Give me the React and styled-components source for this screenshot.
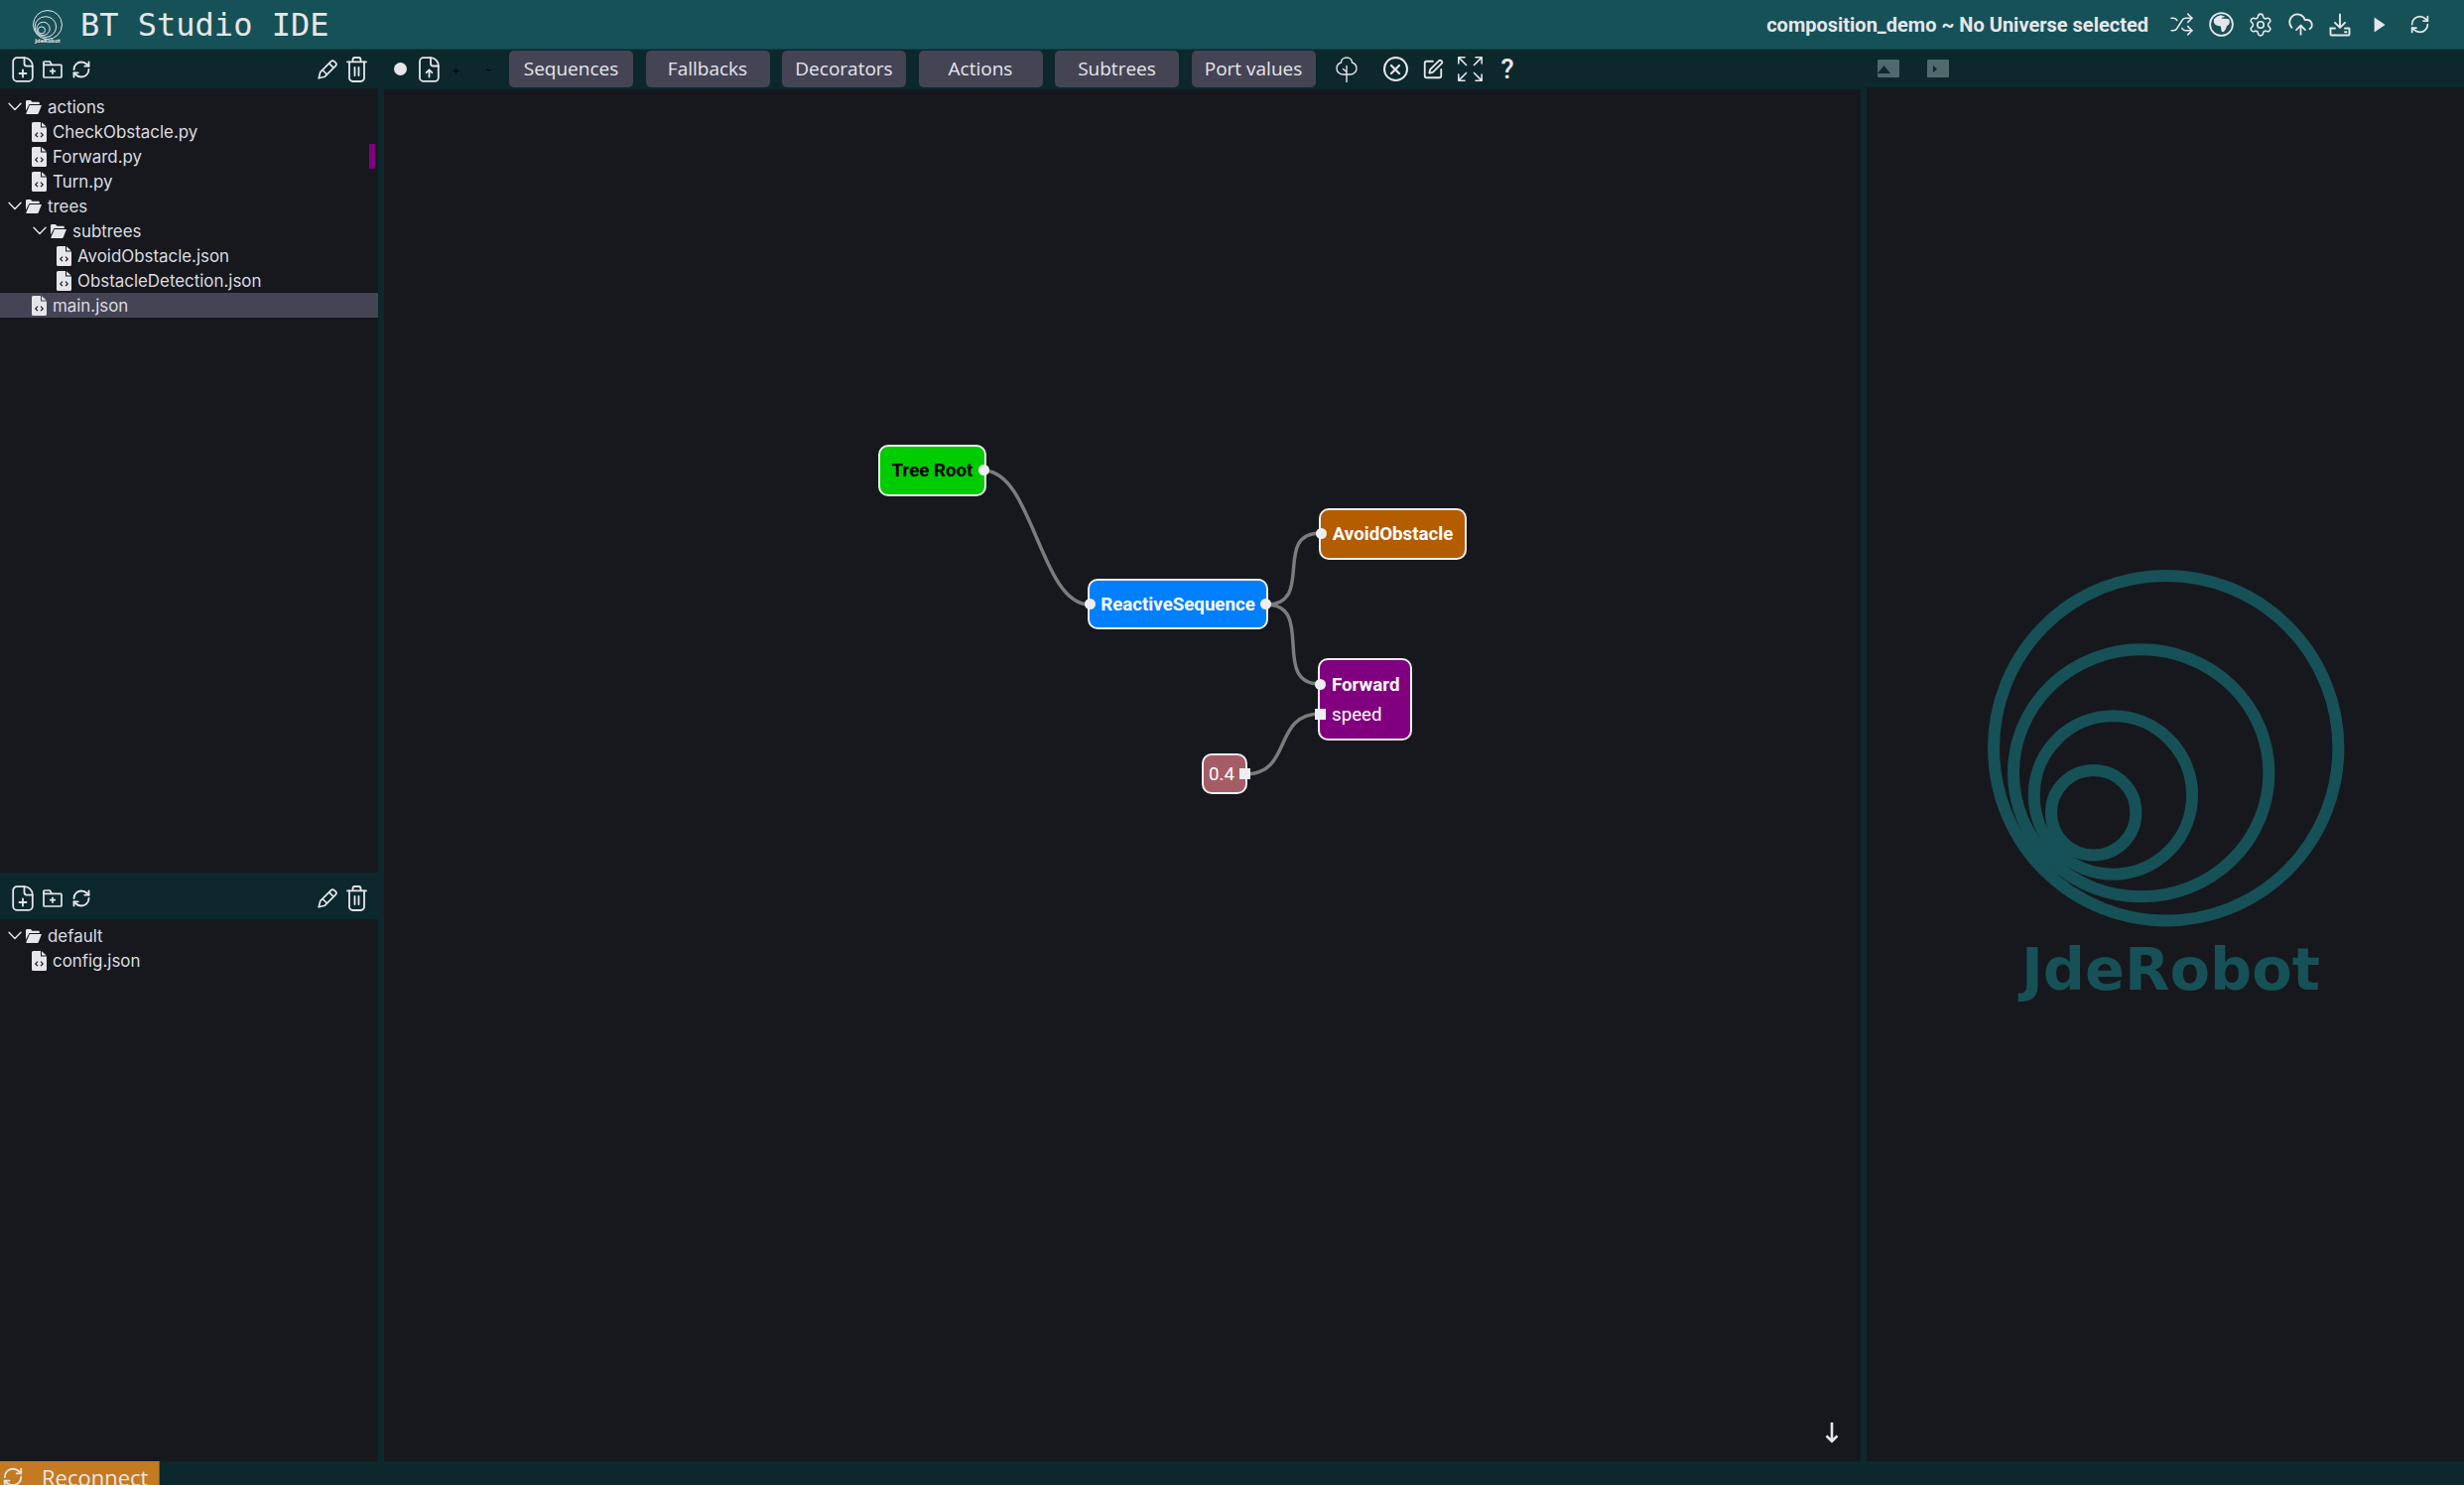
import React from "react"
import styled, {createGlobalStyle} from "styled-components"
import {Shuffle, Settings, CloudUpload, RefreshCw, SquarePen} from "lucide-react"
import {BsArrowsFullscreen} from "react-icons/bs"

const BAND = "#0c282c"
const HEADER = "#165157"
const PANEL = "#16181d"
const INK = "#e6e6ea"

const GlobalStyle = createGlobalStyle`
    html, body {
        margin: 0;
        height: 100%;
        background: ${BAND};
        overflow: hidden;
    }
    #root {
        height: 100%;
    }
    * {
        box-sizing: border-box;
    }
`

const tree = [
    {kind: "folder", level: 0, name: "actions"},
    {kind: "file", level: 1, name: "CheckObstacle.py"},
    {kind: "file", level: 1, name: "Forward.py", marked: true},
    {kind: "file", level: 1, name: "Turn.py"},
    {kind: "folder", level: 0, name: "trees"},
    {kind: "folder", level: 1, name: "subtrees"},
    {kind: "file", level: 2, name: "AvoidObstacle.json"},
    {kind: "file", level: 2, name: "ObstacleDetection.json"},
    {kind: "file", level: 1, name: "main.json", selected: true},
]

const configTree = [
    {kind: "folder", level: 0, name: "default"},
    {kind: "file", level: 1, name: "config.json"},
]

const paletteItems = ["Sequences", "Fallbacks", "Decorators", "Actions", "Subtrees", "Port values"]

// canvas coordinates, the canvas starts at 387,90 of the page
const edges = [
    [604, 384, 711, 519],
    [889, 519, 944, 447],
    [889, 519, 943, 599],
    [867, 690, 944, 629],
]

const edgePath = ([x1, y1, x2, y2]) => `M${x1} ${y1} C${x1 + 50} ${y1} ${x2 - 50} ${y2} ${x2} ${y2}`

const LogoRings = ({size, stroke}) => (
    <svg width={size} height={size} viewBox="0 0 360 360" fill="none" stroke={stroke} strokeWidth="12">
        <circle cx="179.7" cy="179.7" r="173.7" />
        <ellipse cx="154.7" cy="204.8" rx="128.7" ry="124.5" />
        <circle cx="126.4" cy="227" r="79.7" />
        <circle cx="106.7" cy="244.7" r="42.7" />
    </svg>
)

const FileAddIcon = () => (
    <svg width="22" height="26" viewBox="0 0 22 26" fill="none" stroke={INK} strokeWidth="1.8" strokeLinecap="round" strokeLinejoin="round">
        <path d="M5 1.2h7.5c4.5 0 8.3 3.8 8.3 8.3V21a3.8 3.8 0 0 1-3.8 3.8H5A3.8 3.8 0 0 1 1.2 21V5A3.8 3.8 0 0 1 5 1.2z" />
        <path d="M12.5 1.2V7a2.6 2.6 0 0 0 2.6 2.6h5.700" />
        <path d="M11 13.500v7M7.500 17h7" />
    </svg>
)

const FolderAddIcon = () => (
    <svg width="20" height="18" viewBox="0 0 20 18" fill="none" stroke={INK} strokeWidth="1.7" strokeLinejoin="round">
        <path d="M1 3V16.200a.8.8 0 0 0 .8.8h16.400a.8.8 0 0 0 .8-.8V5.200a.8.8 0 0 0-.8-.8H1z" />
        <path d="M1 4V1.800a.8.8 0 0 1 .8-.8h5.400l2 3.400" />
        <path d="M10 7.700v6M7 10.700h6" />
    </svg>
)

const PencilIcon = () => (
    <svg width="20" height="20" viewBox="0 0 20 20" fill="none" stroke={INK} strokeWidth="1.7" strokeLinejoin="round">
        <path d="M1.200 18.800 2.800 12.600 13.600 1.800a2.300 2.300 0 0 1 3.200 0l1.400 1.400a2.300 2.300 0 0 1 0 3.200L7.400 17.200z" />
        <path d="M11.600 3.800 16.200 8.400M5 10.500 9.500 15" />
    </svg>
)

const TrashIcon = () => (
    <svg width="21" height="26" viewBox="0 0 21 26" fill="none" stroke={INK} strokeWidth="1.8" strokeLinecap="round" strokeLinejoin="round">
        <path d="M1 5.400h19" />
        <path d="M6.500 5V3.200A2.200 2.200 0 0 1 8.700 1h3.600a2.200 2.200 0 0 1 2.200 2.200V5" />
        <path d="M3 5.400V21.500A3.500 3.500 0 0 0 6.500 25h8a3.500 3.500 0 0 0 3.500-3.500V5.400" />
        <path d="M8.500 11v8M12.500 11v8" />
    </svg>
)

const UploadFileIcon = () => (
    <svg width="21" height="26" viewBox="0 0 21 26" fill="none" stroke={INK} strokeWidth="1.8" strokeLinecap="round" strokeLinejoin="round">
        <path d="M4.500 1.200H12c4.300 0 7.800 3.600 7.800 8V21.200a3.600 3.600 0 0 1-3.600 3.600H4.500A3.600 3.600 0 0 1 1 21.200V4.800A3.600 3.600 0 0 1 4.500 1.200z" />
        <path d="M12 1.200V7a2.500 2.500 0 0 0 2.500 2.500h5.300" />
        <path d="M10.500 20.500v-7M7.600 16.200l2.900-2.900 2.900 2.900" />
    </svg>
)

const TreeIcon = () => (
    <svg width="22" height="26" viewBox="0 0 22 26" fill="none" stroke={INK} strokeWidth="1.400" strokeLinecap="round" strokeLinejoin="round">
        <path d="M11 1C7.500 1 5.500 3.300 5.500 6 2.500 7 1 9.500 1 12c0 3.500 3 6 6.500 6h7c3.500 0 6.500-2.500 6.500-6 0-2.500-1.500-5-4.500-6C16.500 3.300 14.500 1 11 1z" />
        <path d="M11 9.500V25.500M11 15.500 7.500 12.500" />
    </svg>
)

const GlobeIcon = () => (
    <svg width="25" height="25" viewBox="0 0 25 25">
        <circle cx="12.5" cy="12.5" r="11.4" fill="none" stroke={INK} strokeWidth="1.8" />
        <path fill={INK} d="M5 7.500c2-2.800 4.500-4 7.500-4.300 1 .9 2.500 1.300 3.600 1-.3 1-1.500 1.500-2.800 1.400l-.6 1c2 .7 5-.4 7.600 1 .7 1.900.7 3.500-.2 5l-2.300 1.900c-.3 2-1.300 4-3 5.600-1.200.5-2 .2-2.200-.9-.4-1.700-.4-3.300-.7-4.700C10.500 14 8 14.300 6 12.600 4.800 11 4.600 9.200 5 7.500z" />
    </svg>
)

const TrayDownloadIcon = () => (
    <svg width="22" height="24" viewBox="0 0 22 24" fill="none" stroke={INK} strokeWidth="1.9" strokeLinecap="round" strokeLinejoin="round">
        <path d="M11 1.500v13M6 9.800l5 5 5-5" />
        <path d="M1.500 15.500v6a1 1 0 0 0 1 1h17a1 1 0 0 0 1-1v-6h-4.500" />
        <path d="M6 15.500H1.500" />
        <path d="M16 19.300h1.500" />
    </svg>
)

const PlayIcon = () => (
    <svg width="12" height="16" viewBox="0 0 12 16">
        <path fill={INK} d="M0.600 0.600 11.600 8 0.600 15.400z" />
    </svg>
)

const ChevronIcon = () => (
    <svg width="14" height="9" viewBox="0 0 14 9" fill="none" stroke={INK} strokeWidth="1.400" strokeLinecap="round" strokeLinejoin="round">
        <path d="M1 1.200l6 6.300 6-6.300" />
    </svg>
)

const OpenFolderIcon = () => (
    <svg width="16" height="14" viewBox="0 0 16 14">
        <path fill={INK} d="M0 1.200A1.200 1.200 0 0 1 1.200 0h3.700l1.500 1.800h6.200c.7 0 1.200.5 1.200 1.200v1H3.500L0 10.500z" />
        <path fill={INK} d="M3.900 5H16l-3.300 8.200c-.2.500-.6.800-1.100.8H1.100c-.6 0-.9-.5-.7-1z" />
    </svg>
)

const SourceFileIcon = () => (
    <svg width="15" height="20" viewBox="0 0 15 20">
        <path fill={INK} d="M1.500 0H9v5.500h6V18.500A1.500 1.500 0 0 1 13.500 20h-12A1.500 1.500 0 0 1 0 18.500v-17A1.500 1.500 0 0 1 1.500 0z" />
        <path fill={INK} d="M10 0.300 14.700 4.500H10z" />
        <path fill="none" stroke={PANEL} strokeWidth="1.200" d="M6 10.700l-2.200 2.200L6 15.100M9 10.700l2.200 2.200L9 15.100" />
    </svg>
)

const FileActions = () => (
    <ActionStrip>
        <ActionGroup>
            <FileAddIcon />
            <FolderAddIcon />
            <RefreshCw size={20} color={INK} strokeWidth={2.2} />
        </ActionGroup>
        <ActionGroup>
            <PencilIcon />
            <TrashIcon />
        </ActionGroup>
    </ActionStrip>
)

const FileTree = ({rows}) => (
    <TreeList>
        {rows.map(row => (
            <TreeRow key={row.name} $level={row.level} $file={row.kind === "file"} $selected={row.selected}>
                {row.kind === "folder" ? <FolderGlyphs><ChevronIcon /><OpenFolderIcon /></FolderGlyphs> : <SourceFileIcon />}
                <span>{row.name}</span>
                {row.marked && <EditedMark />}
            </TreeRow>
        ))}
    </TreeList>
)

const App = () => {
    return (
        <Page>
            <GlobalStyle />
            <Header>
                <Brand>
                    <BrandLogo>
                        <LogoRings size={30} stroke={INK} />
                        <BrandCaption>JdeRobot</BrandCaption>
                    </BrandLogo>
                    <Title>BT Studio IDE</Title>
                </Brand>
                <HeaderTools>
                    <ProjectName>composition_demo ~ No Universe selected</ProjectName>
                    <IconRow>
                        <IconSlot><Shuffle size={25} color={INK} strokeWidth={1.5} /></IconSlot>
                        <IconSlot><GlobeIcon /></IconSlot>
                        <IconSlot><Settings size={26} color={INK} strokeWidth={1.5} /></IconSlot>
                        <IconSlot><CloudUpload size={27} color={INK} strokeWidth={1.6} /></IconSlot>
                        <IconSlot><TrayDownloadIcon /></IconSlot>
                        <IconSlot><PlayIcon /></IconSlot>
                        <IconSlot><RefreshCw size={21} color={INK} strokeWidth={2} /></IconSlot>
                    </IconRow>
                </HeaderTools>
            </Header>

            <Toolbar>
                <FileActions />
                <EditorTools>
                    <DotButton />
                    <UploadFileIcon />
                    <ZoomSign>+</ZoomSign>
                    <ZoomSign>-</ZoomSign>
                    <Palette>
                        {paletteItems.map(item => <PaletteButton key={item}>{item}</PaletteButton>)}
                    </Palette>
                    <CanvasTools>
                        <TreeIcon />
                        <CloseCircle>
                            <svg width="12" height="12" viewBox="0 0 12 12" stroke={INK} strokeWidth="2.200" strokeLinecap="round">
                                <path d="M2 2l8 8M10 2l-8 8" />
                            </svg>
                        </CloseCircle>
                        <SquarePen size={22} color={INK} strokeWidth={2} />
                        <BsArrowsFullscreen size={25} color={INK} />
                        <HelpMark>?</HelpMark>
                    </CanvasTools>
                </EditorTools>
                <ConsoleTools>
                    <ConsoleChip>
                        <svg width="13" height="8" viewBox="0 0 13 8"><path fill={BAND} d="M6.500 0 13 8H0z" /></svg>
                    </ConsoleChip>
                    <ConsoleChip $small>
                        <svg width="4" height="7" viewBox="0 0 4 7"><path fill={BAND} d="M0 0l4 3.500-4 3.500z" /></svg>
                    </ConsoleChip>
                </ConsoleTools>
            </Toolbar>

            <Body>
                <Sidebar>
                    <UpperTree>
                        <FileTree rows={tree} />
                    </UpperTree>
                    <LowerStrip>
                        <FileActions />
                    </LowerStrip>
                    <LowerTree>
                        <FileTree rows={configTree} />
                    </LowerTree>
                </Sidebar>
                <Canvas>
                    <EdgeLayer width="1488" height="1382">
                        {edges.map((edge, i) => <path key={i} d={edgePath(edge)} />)}
                    </EdgeLayer>
                    <Node $x={498} $y={358} $w={109} $h={52} $bg="#00cc00" $ink="#000">
                        Tree Root
                        <Port $side="right" $top={25} />
                    </Node>
                    <Node $x={709} $y={493} $w={182} $h={51} $bg="#0080ff">
                        ReactiveSequence
                        <Port $side="left" $top={25} />
                        <Port $side="right" $top={25} />
                    </Node>
                    <Node $x={942} $y={422} $w={149} $h={52} $bg="#b35c00">
                        AvoidObstacle
                        <Port $side="left" $top={25} />
                    </Node>
                    <Node $x={941} $y={573} $w={95} $h={83} $bg="#800080" $stacked>
                        <PortName>Forward</PortName>
                        <PortValue>speed</PortValue>
                        <Port $side="left" $top={26} />
                        <Port $side="left" $top={56} $square />
                    </Node>
                    <Node $x={824} $y={669} $w={46} $h={41} $bg="#a65c66" $light>
                        0.4
                        <Port $side="right" $top={20} $square />
                    </Node>
                    <DownArrow width="14" height="21" viewBox="0 0 14 21" fill="none" stroke={INK} strokeWidth="2.600">
                        <path d="M7 0v19M1.500 13.500 7 19l5.500-5.500" />
                    </DownArrow>
                </Canvas>
                <Preview>
                    <LogoRings size={360} stroke={HEADER} />
                    <PreviewCaption>JdeRobot</PreviewCaption>
                </Preview>
            </Body>

            <StatusBar>
                <ReconnectButton>
                    <RefreshCw size={22} color={INK} strokeWidth={2} />
                    Reconnect
                </ReconnectButton>
            </StatusBar>
        </Page>
    )
}

const Page = styled.div`
    display: flex;
    flex-direction: column;
    width: 100%;
    height: 100vh;
    overflow: hidden;
    color: ${INK};
    font-family: "Inter", "Liberation Sans", sans-serif;
`

const Header = styled.header`
    display: flex;
    align-items: center;
    justify-content: space-between;
    flex: 0 0 50px;
    padding: 0 25px 0 33px;
    background: ${HEADER};
    border-bottom: 1px solid #104046;
`

const Brand = styled.div`
    display: flex;
    align-items: center;
    gap: 18px;
`

const BrandLogo = styled.div`
    display: flex;
    flex-direction: column;
    align-items: center;
    width: 30px;
    height: 36px;
    margin-top: 6px;
`

const BrandCaption = styled.span`
    font-family: "DejaVu Sans", sans-serif;
    font-size: 5px;
    font-weight: 700;
    line-height: 6px;
    margin-top: -2px;
`

const Title = styled.h1`
    margin: 0;
    font-family: "DejaVu Sans Mono", "Liberation Mono", monospace;
    font-size: 32px;
    font-weight: 400;
    line-height: 48px;
`

const HeaderTools = styled.div`
    display: flex;
    align-items: center;
    gap: 13px;
`

const ProjectName = styled.span`
    font-family: "Roboto", sans-serif;
    font-size: 20px;
    font-weight: 700;
    line-height: 46px;
`

const IconRow = styled.div`
    display: flex;
    align-items: center;
`

const IconSlot = styled.span`
    display: flex;
    align-items: center;
    justify-content: center;
    width: 40px;
    height: 30px;
`

const Toolbar = styled.div`
    display: flex;
    align-items: center;
    flex: 0 0 38px;
    padding-top: 1px;
    background: ${BAND};
`

const ActionStrip = styled.div`
    display: flex;
    align-items: center;
    justify-content: space-between;
    flex: 0 0 381px;
    padding: 0 11px 0 12px;
`

const ActionGroup = styled.div`
    display: flex;
    align-items: center;
    gap: 9px;
`

const EditorTools = styled.div`
    display: flex;
    align-items: center;
    flex: 1;
    padding-left: 16px;
`

const DotButton = styled.span`
    width: 13px;
    height: 13px;
    margin-right: 12px;
    border-radius: 50%;
    background: ${INK};
`

const ZoomSign = styled.span`
    width: 33px;
    font-size: 13px;
    text-align: center;
    color: #000;
    &:first-of-type {
        margin-left: 5px;
    }
`

const Palette = styled.div`
    display: flex;
    align-items: center;
    gap: 12.5px;
    margin-left: 4px;
`

const PaletteButton = styled.button`
    width: 125px;
    height: 37px;
    padding: 0;
    border: none;
    border-radius: 5px;
    background: #444455;
    color: ${INK};
    font-family: "Open Sans", sans-serif;
    font-size: 19px;
    line-height: 37px;
`

const CanvasTools = styled.div`
    display: flex;
    align-items: center;
    gap: 14px;
    margin-left: 20px;
`

const CloseCircle = styled.span`
    display: flex;
    align-items: center;
    justify-content: center;
    width: 25px;
    height: 25px;
    margin-left: 12px;
    border: 2px solid ${INK};
    border-radius: 50%;
`

const HelpMark = styled.span`
    font-family: "Roboto", sans-serif;
    font-size: 27px;
    font-weight: 500;
    line-height: 26px;
    margin-left: 5px;
`

const ConsoleTools = styled.div`
    display: flex;
    gap: 28px;
    flex: 0 0 591px;
    margin-top: -2px;
`

const ConsoleChip = styled.span`
    display: flex;
    align-items: center;
    justify-content: flex-start;
    width: 22px;
    height: 18px;
    padding: 2px 0 0 ${props => (props.$small ? 6 : 0)}px;
    background: #4e6a6c;
    border-radius: 1px;
`

const Body = styled.main`
    display: flex;
    flex: 1;
    min-height: 0;
    gap: 6px;
`

const Sidebar = styled.aside`
    display: flex;
    flex-direction: column;
    flex: 0 0 381px;
    margin-top: 1px;
    background: ${PANEL};
`

const UpperTree = styled.div`
    flex: 0 0 790px;
    padding-top: 6px;
`

const LowerTree = styled.div`
    flex: 1;
    padding-top: 4px;
`

const LowerStrip = styled.div`
    display: flex;
    flex: 0 0 47px;
    padding-top: 4px;
    background: ${BAND};
`

const TreeList = styled.ul`
    margin: 0;
    padding: 0;
    list-style: none;
`

const TreeRow = styled.li`
    position: relative;
    display: flex;
    align-items: center;
    height: 25px;
    gap: 6px;
    padding-left: ${props => (props.$file ? 7 : 8) + props.$level * 25}px;
    background: ${props => (props.$selected ? "#444455" : "transparent")};
    font-size: 16.9px;
    color: #dcdce0;
`

const FolderGlyphs = styled.span`
    display: flex;
    align-items: center;
    gap: 4px;
`

const EditedMark = styled.i`
    position: absolute;
    right: 3px;
    top: 0;
    width: 6px;
    height: 25px;
    background: #800080;
`

const Canvas = styled.section`
    position: relative;
    flex: 1;
    margin-top: 2px;
    background: ${PANEL};
    overflow: hidden;
`

const EdgeLayer = styled.svg`
    position: absolute;
    left: 0;
    top: 0;
    fill: none;
    stroke: #7c7c7c;
    stroke-width: 3.5;
`

const Node = styled.div`
    position: absolute;
    left: ${props => props.$x}px;
    top: ${props => props.$y}px;
    width: ${props => props.$w}px;
    height: ${props => props.$h}px;
    display: flex;
    flex-direction: column;
    align-items: ${props => (props.$stacked ? "flex-start" : "center")};
    justify-content: center;
    padding: 0 ${props => (props.$light ? 6 : 0)}px 0 ${props => (props.$stacked ? 12 : 0)}px;
    border: 2px solid #eeeef2;
    border-radius: 10px;
    background: ${props => props.$bg};
    color: ${props => props.$ink || "#fff"};
    font-family: "Roboto", sans-serif;
    font-size: 18.7px;
    font-weight: ${props => (props.$light ? 400 : 700)};
`

const PortName = styled.span`
    line-height: 30px;
`

const PortValue = styled.span`
    font-weight: 400;
    line-height: 30px;
`

const Port = styled.i`
    position: absolute;
    top: ${props => props.$top - 7}px;
    ${props => props.$side}: -5px;
    width: 11px;
    height: 11px;
    background: #eeeef2;
    border-radius: ${props => (props.$square ? 0 : "50%")};
`

const DownArrow = styled.svg`
    position: absolute;
    right: 22px;
    bottom: 18px;
`

const Preview = styled.section`
    display: flex;
    flex-direction: column;
    align-items: center;
    flex: 0 0 602px;
    padding: 486px 0 0 2px;
    background: ${PANEL};
`

const PreviewCaption = styled.div`
    margin-top: 8px;
    padding-left: 9px;
    font-family: "DejaVu Sans", sans-serif;
    font-size: 59px;
    font-weight: 700;
    line-height: 70px;
    color: ${HEADER};
`

const StatusBar = styled.footer`
    flex: 0 0 24px;
    background: ${BAND};
    overflow: hidden;
`

const ReconnectButton = styled.button`
    display: flex;
    align-items: center;
    gap: 18px;
    width: 161px;
    height: 32px;
    padding: 0 0 0 2px;
    border: none;
    border-right: 1px solid #8a5a20;
    background: #c47a20;
    color: ${INK};
    font-family: "Open Sans", sans-serif;
    font-size: 22px;
`

export default App
